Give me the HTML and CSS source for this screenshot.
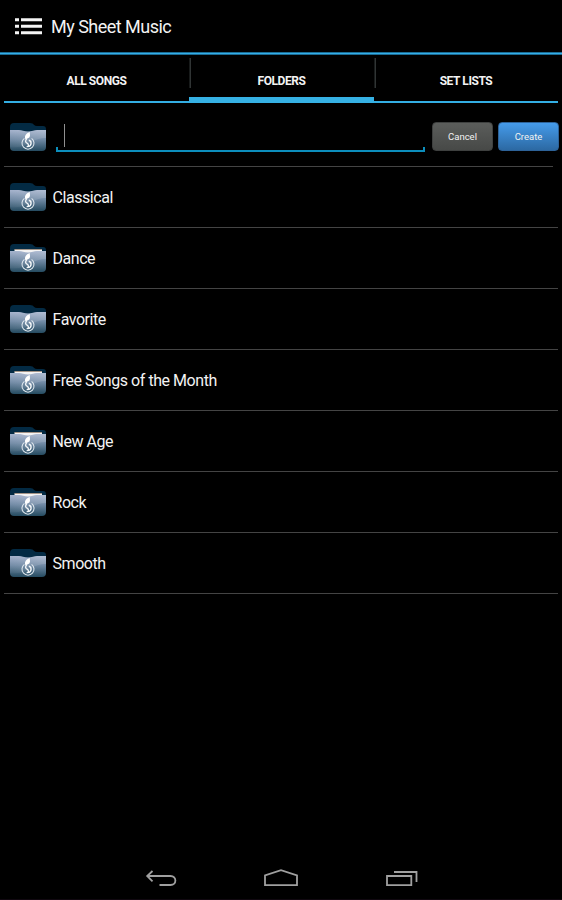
FILE: index.html
```html
<!DOCTYPE html>
<html lang="en">
<head>
<meta charset="utf-8">
<title>My Sheet Music</title>
<link rel="stylesheet" href="styles.css">
</head>
<body>
<svg class="defs" width="0" height="0" aria-hidden="true">
  <defs>
    <linearGradient id="front" x1="0" y1="0" x2="0" y2="1">
      <stop offset="0" stop-color="#a4b2cc"/>
      <stop offset=".45" stop-color="#718aa5"/>
      <stop offset="1" stop-color="#254b60"/>
    </linearGradient>
    <linearGradient id="gloss" x1="0" y1="0" x2="1" y2="0">
      <stop offset="0" stop-color="#fff" stop-opacity=".02"/>
      <stop offset="1" stop-color="#fff" stop-opacity=".16"/>
    </linearGradient>
    <g id="note">
      <path d="M14.4 15.4A6 6 0 1 0 21.6 15.4" fill="none" stroke="#dce5ec" stroke-width="1.1"/>
      <path d="M19.8 9C19.5 11 20.8 12.6 19.3 14.4L15.6 16.6C14.2 14 15 10.8 19.8 9Z" fill="#fff"/>
      <path d="M16.8 15.6C14.8 18 15.6 19.6 17.4 20.4C19 21.4 18.6 24 16.6 23.6M18.8 17.2C22 17.8 21.8 22.4 18.4 23.6" fill="none" stroke="#f5f8fa" stroke-width="1.4"/>
    </g>
    <symbol id="folder" viewBox="0 0 36 28">
      <path d="M0 8V4Q0 0 4 0H20Q23 0 24.2 2Q25 3 27 3H33Q36 3 36 6V12H0Z" fill="#032a43"/>
      <path d="M0 7H9Q11 7 13 7.8Q18 9 23 7.8Q25 7 27 7H36V24Q36 28 32 28H4Q0 28 0 24Z" fill="url(#front)"/>
      <path d="M36 7V15Q27 15 20 20Q12 25 0 24V7H9Q18 9.5 27 7Z" fill="url(#gloss)"/>
      <use href="#note"/>
    </symbol>
    <symbol id="folder-full" viewBox="0 0 36 28">
      <path d="M0 8V4Q0 0 4 0H20Q23 0 24.2 2Q25 3 27 3H33Q36 3 36 6V12H0Z" fill="#032a43"/>
      <path d="M4.5 5.6H32V9H4.5Z" fill="#f4f3f3"/>
      <path d="M4.5 5.2H32V6H4.5Z" fill="#b69c88"/>
      <path d="M0 7H9Q11 7 13 7.8Q18 9 23 7.8Q25 7 27 7H36V24Q36 28 32 28H4Q0 28 0 24Z" fill="url(#front)"/>
      <path d="M36 7V15Q27 15 20 20Q12 25 0 24V7H9Q18 9.5 27 7Z" fill="url(#gloss)"/>
      <use href="#note"/>
    </symbol>
  </defs>
</svg>

<header class="header">
  <svg class="menu-icon" width="27" height="17" viewBox="0 0 27 17" fill="#f4f4f4">
    <path d="M0 .2h4v3H0zM6 .2h21v3H6zM0 6.8h4v3H0zM6 6.8h21v3H6zM0 13.2h4v3H0zM6 13.2h21v3H6z"/>
  </svg>
  <h1 class="title">My Sheet Music</h1>
</header>

<nav class="tabs">
  <div class="tab">ALL SONGS</div>
  <div class="tab tab-active">FOLDERS</div>
  <div class="tab">SET LISTS</div>
</nav>

<main class="main">
  <div class="create">
    <svg class="folder"><use href="#folder"/></svg>
    <div class="field"><span class="caret"></span></div>
    <button class="button">Cancel</button>
    <button class="button button-primary">Create</button>
  </div>
  <ul class="list">
    <li class="row"><svg class="folder"><use href="#folder"/></svg><span>Classical</span></li>
    <li class="row"><svg class="folder"><use href="#folder-full"/></svg><span>Dance</span></li>
    <li class="row"><svg class="folder"><use href="#folder"/></svg><span>Favorite</span></li>
    <li class="row"><svg class="folder"><use href="#folder-full"/></svg><span>Free Songs of the Month</span></li>
    <li class="row"><svg class="folder"><use href="#folder-full"/></svg><span>New Age</span></li>
    <li class="row"><svg class="folder"><use href="#folder-full"/></svg><span>Rock</span></li>
    <li class="row"><svg class="folder"><use href="#folder"/></svg><span>Smooth</span></li>
  </ul>
</main>

<footer class="system">
  <svg width="32" height="20" viewBox="0 0 32 20"><path d="M7.5 2L2.2 7L7.5 12.3M2.2 7H25.5C32 7 32 16 25.5 16H14.5"/></svg>
  <svg width="36" height="20" viewBox="0 0 36 20"><path d="M2 16.2V6.4L18 1.2L34 6.4V16.2Z"/></svg>
  <svg width="34" height="20" viewBox="0 0 34 20"><path d="M3 7H27.3V16.2H3ZM10 3H32.5V13"/></svg>
</footer>
</body>
</html>
```
FILE: styles.css
```css
* {
  box-sizing: border-box;
}

body {
  margin: 0;
  height: 900px;
  display: flex;
  flex-direction: column;
  overflow: hidden;
  background: #000;
  color: #f3f3f3;
  font-family: Roboto, "Liberation Sans", sans-serif;
}

.defs {
  position: absolute;
}

.header {
  height: 55px;
  flex: none;
  display: flex;
  align-items: center;
  gap: 9px;
  padding: 0 15px 3px;
  background: linear-gradient(#1b6c94 1px, #33aee8 1px 2px, #1b6c94 2px) left bottom / 100% 3px no-repeat;
}

.title {
  margin: 2px 0 0;
  font-size: 18px;
  line-height: 24px;
  font-weight: 400;
  letter-spacing: -0.52px;
}

.tabs {
  height: 48px;
  flex: none;
  display: grid;
  grid-template-columns: 185px 185px 184px;
  padding: 0 4px;
}

.tab {
  position: relative;
  display: flex;
  align-items: center;
  justify-content: center;
  padding-top: 5px;
  border-bottom: 2px solid #33aee3;
  font-size: 12px;
  font-weight: 700;
  letter-spacing: -0.42px;
}

.tab + .tab::before {
  content: "";
  position: absolute;
  top: 3px;
  left: 0;
  width: 2px;
  height: 30px;
  background: linear-gradient(90deg, #181b1b 50%, #303434 50%);
}

.tab-active {
  border-bottom: 6px solid #36b1e4;
  padding-top: 9px;
}

.main {
  flex: 1;
  padding: 0 4px;
}

.create {
  height: 64px;
  display: flex;
  align-items: center;
  padding: 4px 0 0 6px;
  background: linear-gradient(#444, #444) left bottom / 549px 1px no-repeat;
}

.folder {
  width: 36px;
  height: 28px;
  flex: none;
}

.field {
  width: 369px;
  height: 28px;
  flex: none;
  margin: 2px 8px 0 9.5px;
  padding: 0 0 3px 8px;
  border-bottom: 2px solid #0c8ebc;
  background:
    linear-gradient(#0c8ebc, #0c8ebc) left bottom / 2px 3px no-repeat,
    linear-gradient(#0c8ebc, #0c8ebc) right bottom / 2px 3px no-repeat;
}

.caret {
  display: block;
  width: 1px;
  height: 23px;
  background: #909090;
}

.button {
  width: 61px;
  height: 29px;
  flex: none;
  margin: 0 0 1px -0.5px;
  padding: 0;
  border: 1px solid #3e403f;
  border-radius: 4px;
  background: linear-gradient(#5b5d5b, #474947);
  color: #f2f2f2;
  font: 400 9.5px Roboto, sans-serif;
}

.button-primary {
  margin-left: 5px;
  border-color: #2d6298;
  background: linear-gradient(#459bea, #2c69a3);
}

.list {
  margin: 0;
  padding: 0;
  list-style: none;
}

.row {
  height: 61px;
  display: flex;
  align-items: center;
  gap: 6.5px;
  padding-left: 6px;
  border-bottom: 1px solid #444;
  font-size: 16px;
  letter-spacing: -0.45px;
}

.system {
  height: 40px;
  flex: none;
  display: flex;
  justify-content: space-between;
  padding: 9px 144px 0 145px;
  border-bottom: 1px solid #100810;
}

.system svg {
  fill: none;
  stroke: #a0a0a0;
  stroke-width: 1.8;
}
```
